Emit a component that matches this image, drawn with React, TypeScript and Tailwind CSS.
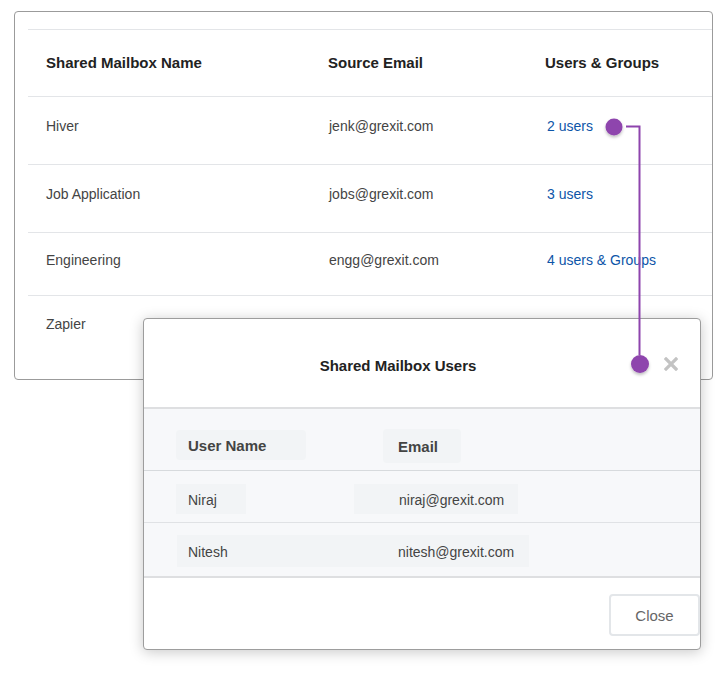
import React from "react";

const rows = [
  { name: "Hiver", email: "jenk@grexit.com", users: "2 users", h: "h-[68px]" },
  { name: "Job Application", email: "jobs@grexit.com", users: "3 users", h: "h-[68px]" },
  { name: "Engineering", email: "engg@grexit.com", users: "4 users & Groups", h: "h-[63px]" },
];

function MailboxTable() {
  return (
    <div className="ml-[14px] mt-[11px] h-[369px] w-[699px] overflow-hidden rounded-[4px] border border-[#9b9b9b] bg-white pl-[13px] pt-[17px]">
      <div className="border-t border-[#e3e5e8]">
        <div className="grid h-[67px] grid-cols-[282px_217px_1fr] items-center border-b border-[#e3e5e8] pl-[18px] text-[15px] font-bold text-[#222]">
          <span>Shared Mailbox Name</span>
          <span>Source Email</span>
          <span>Users &amp; Groups</span>
        </div>
        {rows.map((r) => (
          <div
            key={r.name}
            className={`grid ${r.h} grid-cols-[283px_218px_1fr] items-center border-b border-[#e3e5e8] pb-[8px] pl-[18px] text-[14px] text-[#444]`}
          >
            <span>{r.name}</span>
            <span>{r.email}</span>
            <span className="text-[#0d55a8]">{r.users}</span>
          </div>
        ))}
        <div className="pl-[18px] pt-[18px] text-[14px] text-[#444]">Zapier</div>
      </div>
    </div>
  );
}

function UsersModal() {
  return (
    <div className="absolute left-[143px] top-[318px] flex h-[332px] w-[558px] flex-col overflow-hidden rounded-[4px] border border-[#9d9d9d] bg-white shadow-[0_2px_14px_rgba(0,0,0,0.22)]">
      <div className="relative flex h-[90px] shrink-0 items-center justify-center border-b-2 border-[#dedfe1] pr-[48px] pt-[6px] text-[15px] font-bold text-[#222]">
        Shared Mailbox Users
        <svg className="absolute right-[22px] top-[38px] h-[14px] w-[14px]" viewBox="0 0 14 14">
          <path d="M2 2 L12 12 M12 2 L2 12" stroke="#c3c3c3" strokeWidth="3.2" strokeLinecap="square" />
        </svg>
      </div>
      <div className="bg-[#f7f8fa] text-[14px]">
        <div className="flex h-[62px] items-start border-b border-[#d7dadd] pt-[21px] text-[15px] font-bold text-[#444]">
          <div className="ml-[32px] flex h-[30px] w-[130px] items-center rounded-sm bg-[#f2f4f6] pl-[12px] pt-[3px]">User Name</div>
          <div className="ml-[77px] -mt-[1px] flex h-[34px] w-[78px] items-center rounded-sm bg-[#f2f4f6] pl-[15px] pt-[3px]">Email</div>
        </div>
        <div className="flex h-[52px] items-start border-b border-[#e0e2e5] pt-[13px] text-[#444]">
          <div className="ml-[32px] flex h-[30px] w-[70px] items-center bg-[#f2f4f6] pl-[12px] pt-[3px]">Niraj</div>
          <div className="ml-[108px] flex h-[30px] w-[164px] items-center bg-[#f2f4f6] pl-[45px] pt-[3px]">niraj@grexit.com</div>
        </div>
        <div className="flex h-[55px] items-start border-b-2 border-[#dedfe1] pt-[12px] text-[#444]">
          <div className="ml-[33px] flex h-[32px] w-[352px] items-center bg-[#f2f4f6] pl-[11px] pt-[2px]">
            <span className="w-[210px]">Nitesh</span>
            <span>nitesh@grexit.com</span>
          </div>
        </div>
      </div>
      <div className="flex flex-1 items-start justify-end pt-[16px]">
        <button className="h-[42px] w-[91px] rounded-[4px] border-2 border-[#e3e6e9] bg-white pt-[2px] text-[15px] text-[#666]">
          Close
        </button>
      </div>
    </div>
  );
}

function Connector() {
  return (
    <svg className="pointer-events-none absolute left-0 top-0" width="724" height="690">
      <defs>
        <filter id="sh" x="-50%" y="-50%" width="200%" height="200%">
          <feDropShadow dx="0" dy="2" stdDeviation="1.5" floodColor="#000" floodOpacity="0.25" />
        </filter>
      </defs>
      <path d="M626 126.5 H639.5 V355" stroke="#8e44ad" strokeWidth="2" fill="none" />
      <circle cx="614" cy="127" r="8.5" fill="#8e44ad" filter="url(#sh)" />
      <circle cx="640" cy="364" r="9" fill="#8e44ad" filter="url(#sh)" />
    </svg>
  );
}

export default function App() {
  return (
    <div className="relative h-[690px] w-[724px] overflow-hidden bg-white font-['Liberation_Sans',Arial,sans-serif]">
      <MailboxTable />
      <UsersModal />
      <Connector />
    </div>
  );
}
